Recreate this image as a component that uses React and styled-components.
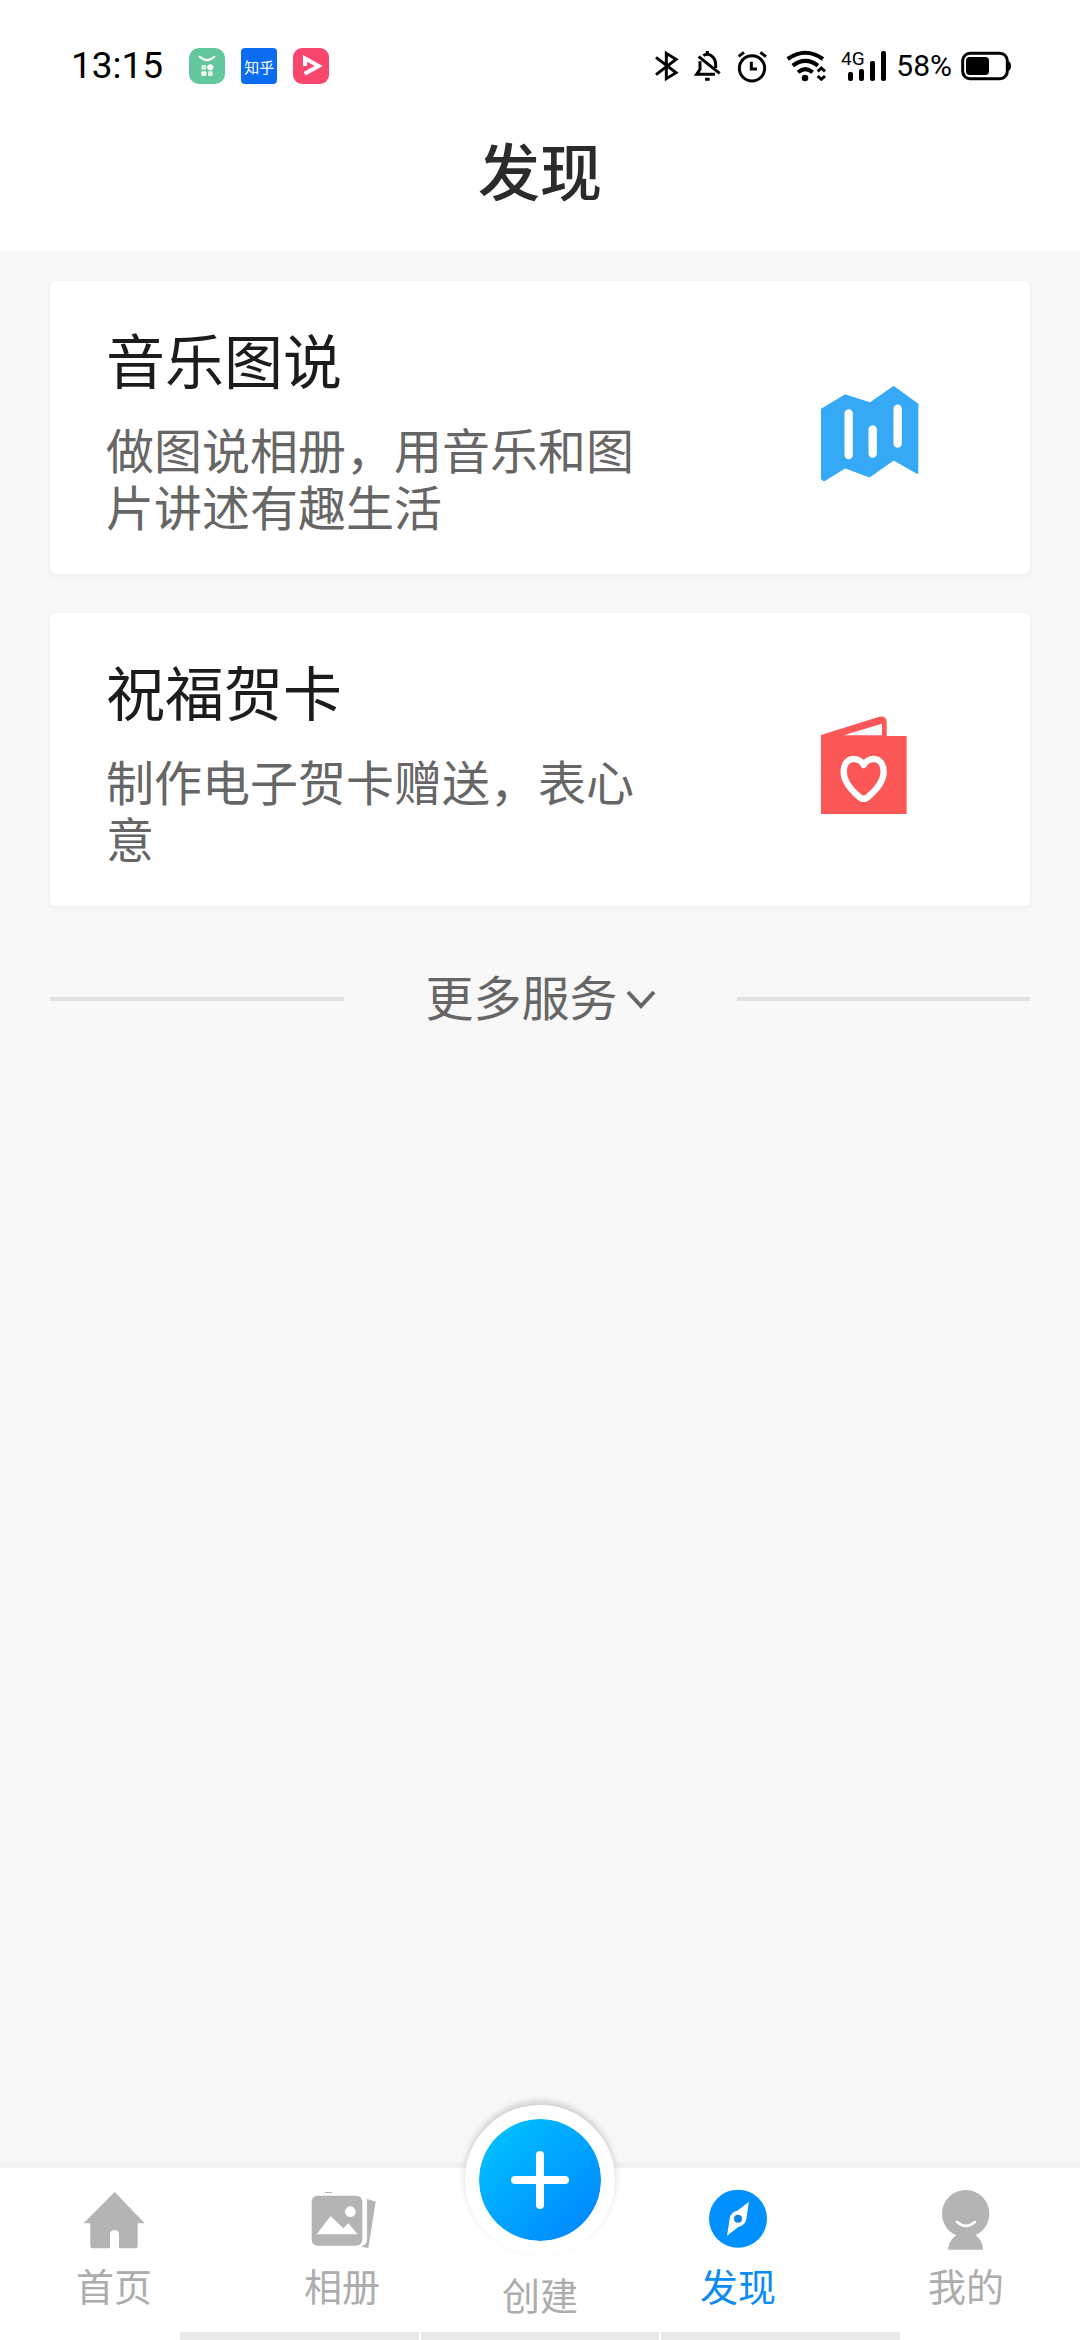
import styled, { createGlobalStyle } from "styled-components";

const GlobalStyle = createGlobalStyle`
  * {
    box-sizing: border-box;
  }

  body {
    margin: 0;
    background-color: #f8f8f8;
    font-family: Roboto, "Noto Sans CJK SC", sans-serif;
  }

  button {
    border: none;
    padding: 0;
    background: none;
    font: inherit;
    color: inherit;
    cursor: pointer;
  }

  svg {
    display: block;
    overflow: visible;
  }
`;

const Container = styled.div`
  min-height: 100vh;
  display: flex;
  flex-direction: column;
`;

const Header = styled.header`
  background-color: white;
  padding: 50px 0 35px;
`;

const StatusBar = styled.div`
  display: flex;
  justify-content: space-between;
  align-items: center;
  height: 32px;
  padding: 0 68px 0 71px;
  color: black;
`;

const StatusGroup = styled.div`
  display: flex;
  align-items: center;
  gap: ${(props) => props.$gap}px;
`;

const Time = styled.span`
  font-size: 37px;
  line-height: 40px;
  margin-right: 10px;
`;

const Percent = styled.span`
  font-size: 30px;
  line-height: 32px;
`;

const AppBadge = styled.span`
  width: 36px;
  height: 36px;
  display: flex;
  align-items: center;
  justify-content: center;
  border-radius: ${(props) => props.$radius}px;
  background-color: ${(props) => props.$bg};
  color: white;
  font-size: 15px;
`;

const PageTitle = styled.h1`
  margin: 53px 0 0;
  font-size: 62px;
  font-weight: 500;
  line-height: 80px;
  text-align: center;
  color: #2b2b2b;
`;

const Main = styled.main`
  flex: 1;
  padding: 31px 50px 0;
`;

const CardList = styled.div`
  display: flex;
  flex-direction: column;
  gap: 39px;
`;

const Card = styled.a`
  display: flex;
  justify-content: space-between;
  align-items: center;
  padding: 48px 110px 36px 56px;
  background-color: white;
  border-radius: 6px;
  box-shadow: 0 2px 6px rgba(0, 0, 0, 0.05);
  text-decoration: none;
`;

const CardText = styled.div`
  width: 560px;
`;

const CardTitle = styled.h2`
  margin: 0 0 25px;
  font-size: 59px;
  font-weight: 400;
  line-height: 70px;
  color: #1c1c1c;
`;

const CardDesc = styled.p`
  margin: 0;
  font-size: 48px;
  line-height: 57px;
  color: #666;
`;

const More = styled.div`
  display: flex;
  align-items: center;
  gap: 82px;
  margin-top: 58px;
`;

const Line = styled.span`
  flex: 1;
  height: 4px;
  background-color: #e2e2e2;
`;

const MoreButton = styled.button`
  display: flex;
  align-items: center;
  gap: 9px;
  padding-top: 2px;
  font-size: 48px;
  line-height: 68px;
  color: #666;
`;

const Footer = styled.footer`
  background-color: white;
  border-top: 6px solid #f2f2f2;
`;

const Nav = styled.nav`
  display: grid;
  grid-template-columns: 19fr 19fr 14fr 19fr 19fr;
  align-items: start;
  height: 164px;
`;

const NavItem = styled.a`
  display: flex;
  flex-direction: column;
  align-items: center;
  gap: 14px;
  padding-top: 20px;
  font-size: 38px;
  line-height: 44px;
  text-decoration: none;
  color: ${(props) => (props.$active ? "#0a8cf0" : "#adadad")};
`;

const CreateButton = styled.button`
  display: flex;
  flex-direction: column;
  align-items: center;
  gap: 20px;
  margin-top: -63px;
  font-size: 38px;
  line-height: 44px;
  color: #adadad;
`;

const CreateCircle = styled.span`
  width: 150px;
  height: 150px;
  display: flex;
  border: 14px solid white;
  border-radius: 50%;
  background: linear-gradient(135deg, #00c0ff 10%, #008cff 85%) padding-box;
  background-color: white;
  box-shadow: 0 -4px 6px rgba(70, 50, 50, 0.22);
  align-items: center;
  justify-content: center;
`;

const HomeStrip = styled.div`
  display: flex;
  gap: 2px;
  height: 8px;
  width: 66.6%;
  margin: 0 auto;
`;

const StripPart = styled.span`
  flex: 1;
  background-color: #e9e9e9;
`;

const BluetoothIcon = () => (
  <svg width="26" height="32" viewBox="0 0 78 96" fill="none" stroke="currentColor" strokeWidth="9">
    <path d="M6 22L66 68L37 86V10L66 28L6 74" />
  </svg>
);

const MutedIcon = () => (
  <svg width="30" height="32" viewBox="0 0 90 96" fill="none" stroke="currentColor" strokeWidth="9">
    <path d="M14 20L77 70" />
    <path d="M28 17Q40 8 52 17Q65 26 65 44V54" />
    <path d="M18 34V58L8 73H63" />
    <path d="M40 3V12M33 88H47" />
  </svg>
);

const AlarmIcon = () => (
  <svg width="32" height="32" viewBox="0 0 96 96" fill="none" stroke="currentColor" strokeWidth="9">
    <circle cx="42" cy="55" r="38" />
    <path d="M2 19L18 7M67 7L84 20" />
    <path d="M40 35V57H57" />
  </svg>
);

const WifiIcon = () => (
  <svg width="43" height="32" viewBox="0 0 129 96" fill="none" stroke="currentColor">
    <g strokeWidth="12">
      <path d="M11 27Q64 -10 117 27" />
      <path d="M26 47Q64 18 102 47" />
      <path d="M42 67Q64 48 86 67" />
    </g>
    <circle cx="63" cy="84" r="10" fill="currentColor" stroke="none" />
    <path d="M101 64L112 54L123 64M101 78L112 88L123 78" strokeWidth="9" />
  </svg>
);

const SignalText = styled.text`
  font-size: 19px;
  font-weight: 400;
`;

const SignalIcon = () => (
  <svg width="46" height="32" viewBox="0 0 46 32" fill="currentColor">
    <SignalText x="0" y="15">4G</SignalText>
    <rect x="7" y="22" width="5" height="9" rx="2" />
    <rect x="18" y="19" width="5" height="12" rx="2" />
    <rect x="29" y="11" width="5" height="20" rx="2" />
    <rect x="40" y="1" width="5" height="30" rx="2" />
  </svg>
);

const BatteryIcon = () => (
  <svg width="51" height="32" viewBox="0 0 153 96">
    <rect x="5" y="10" width="134" height="76" rx="22" fill="none" stroke="currentColor" strokeWidth="9" />
    <rect x="15" y="21" width="69" height="54" rx="11" fill="currentColor" />
    <path d="M142 33Q150 36 150 48Q150 60 142 63Z" fill="currentColor" />
  </svg>
);

const LeafAppIcon = () => (
  <svg width="36" height="36" viewBox="0 0 108 108" fill="white">
    <path d="M30 25Q54 48 78 25" fill="none" stroke="white" strokeWidth="6" />
    <rect x="37" y="51" width="15" height="14" rx="3" opacity="0.7" />
    <circle cx="64" cy="58" r="9" />
    <rect x="37" y="70" width="15" height="14" rx="3" opacity="0.9" />
    <rect x="57" y="70" width="14" height="14" rx="3" opacity="0.8" />
  </svg>
);

const PlayAppIcon = () => (
  <svg width="36" height="36" viewBox="0 0 108 108">
    <path
      d="M36 54V31L77 54L35 77"
      fill="none"
      stroke="white"
      strokeWidth="12"
    />
  </svg>
);

const MusicMapIcon = () => (
  <svg width="100" height="100" viewBox="0 0 300 300">
    <path
      d="M6 76L76 34L151 58L221 9L292 61V267L221 226L148 277L75 250L12 289L6 284Z"
      fill="#35a8f6"
      stroke="#35a8f6"
      strokeWidth="6"
      strokeLinejoin="round"
    />
    <path
      d="M86 88V213M158 136V209M233 74V179"
      stroke="white"
      strokeWidth="25"
      strokeLinecap="round"
    />
  </svg>
);

const GreetingCardIcon = () => (
  <svg width="100" height="100" viewBox="0 0 300 300">
    <path d="M3 60V57L178 2Q200 -2 200 18V60H260V294H3Z" fill="#fb5757" />
    <path d="M73 57L186 23V58L73 58Z" fill="white" />
    <path
      d="M131 147C120 122 71 118 71 168C71 200 105 232 118 243Q131 254 144 243C157 232 191 200 191 168C191 118 142 122 131 147Z"
      fill="none"
      stroke="white"
      strokeWidth="19"
      strokeLinejoin="round"
    />
  </svg>
);

const ChevronIcon = () => (
  <svg width="28" height="18" viewBox="0 0 28 18" fill="none" stroke="currentColor" strokeWidth="4">
    <path d="M1 1L14 15L27 1" />
  </svg>
);

const PlusIcon = () => (
  <svg width="60" height="60" viewBox="0 0 60 60" stroke="white" strokeWidth="8" strokeLinecap="round">
    <path d="M30 5V55M5 30H55" />
  </svg>
);

const HomeIcon = () => (
  <svg width="64" height="64" viewBox="0 0 192 192" fill="#b4b4b4">
    <path d="M98 12L188 106H167V175Q167 181 161 181H111V138Q110 126 98 126Q85 126 84 138V181H32Q25 181 25 175V106H5Z" />
  </svg>
);

const AlbumIcon = () => (
  <svg width="64" height="64" viewBox="0 0 192 192" fill="#b4b4b4">
    <rect x="5" y="23" width="152" height="150" rx="18" />
    <circle cx="121" cy="71" r="16" fill="white" />
    <path d="M20 139L62 84L100 121L115 106L143 139Z" fill="white" />
    <path d="M171 33L197 41L175 180L153 176Q171 170 171 154Z" />
    <rect x="45" y="12" width="20" height="3" />
  </svg>
);

const CompassIcon = () => (
  <svg width="64" height="64" viewBox="0 0 192 192">
    <circle cx="96" cy="92" r="87" fill="#0090ff" />
    <path d="M129 41L121 92Q118 112 98 116L63 143L71 92Q74 72 94 68Z" fill="white" />
    <circle cx="96" cy="92" r="12" fill="#0a84e6" />
  </svg>
);

const UserIcon = () => (
  <svg width="64" height="64" viewBox="0 0 192 192" fill="#b4b4b4">
    <circle cx="95" cy="77" r="71" />
    <path d="M42 185C44 162 56 148 72 138H118C136 148 146 163 147 185Z" />
    <path d="M69 102Q96 125 123 102" fill="none" stroke="white" strokeWidth="8" strokeLinecap="round" />
  </svg>
);

const services = [
  {
    id: 1,
    title: "音乐图说",
    desc: "做图说相册，用音乐和图片讲述有趣生活",
    icon: <MusicMapIcon />,
  },
  {
    id: 2,
    title: "祝福贺卡",
    desc: "制作电子贺卡赠送，表心意",
    icon: <GreetingCardIcon />,
  },
];

const App = () => {
  return (
    <Container>
      <GlobalStyle />
      <Header>
        <StatusBar>
          <StatusGroup $gap={16}>
            <Time>13:15</Time>
            <AppBadge $bg="#63c79d" $radius={10}>
              <LeafAppIcon />
            </AppBadge>
            <AppBadge $bg="#0a6cf0" $radius={4}>知乎</AppBadge>
            <AppBadge $bg="#f8466f" $radius={9}>
              <PlayAppIcon />
            </AppBadge>
          </StatusGroup>
          <StatusGroup $gap={9}>
            <StatusGroup $gap={14}>
              <BluetoothIcon />
              <MutedIcon />
              <AlarmIcon />
              <WifiIcon />
              <SignalIcon />
            </StatusGroup>
            <Percent>58%</Percent>
            <BatteryIcon />
          </StatusGroup>
        </StatusBar>
        <PageTitle>发现</PageTitle>
      </Header>
      <Main>
        <CardList>
          {services.map((item) => (
            <Card key={item.id} href="#">
              <CardText>
                <CardTitle>{item.title}</CardTitle>
                <CardDesc>{item.desc}</CardDesc>
              </CardText>
              {item.icon}
            </Card>
          ))}
        </CardList>
        <More>
          <Line />
          <MoreButton>
            更多服务
            <ChevronIcon />
          </MoreButton>
          <Line />
        </More>
      </Main>
      <Footer>
        <Nav>
          <NavItem href="#">
            <HomeIcon />
            首页
          </NavItem>
          <NavItem href="#">
            <AlbumIcon />
            相册
          </NavItem>
          <CreateButton>
            <CreateCircle>
              <PlusIcon />
            </CreateCircle>
            创建
          </CreateButton>
          <NavItem href="#" $active>
            <CompassIcon />
            发现
          </NavItem>
          <NavItem href="#">
            <UserIcon />
            我的
          </NavItem>
        </Nav>
        <HomeStrip>
          <StripPart />
          <StripPart />
          <StripPart />
        </HomeStrip>
      </Footer>
    </Container>
  );
};

export default App;
